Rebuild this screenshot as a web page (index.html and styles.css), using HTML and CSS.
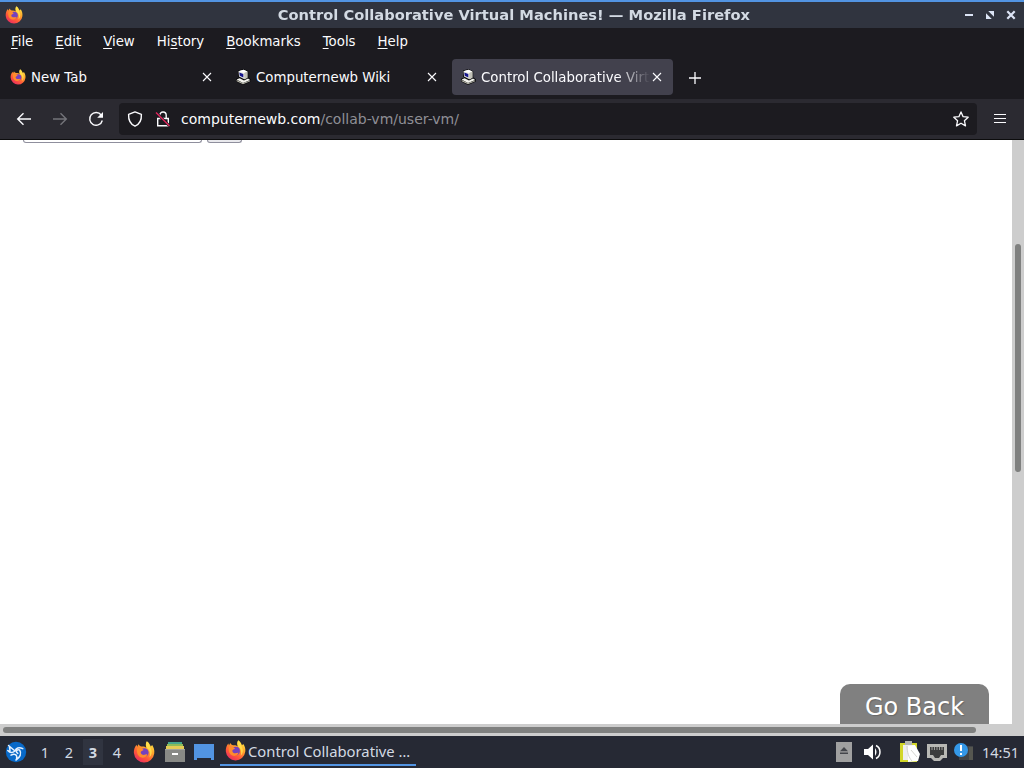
FILE: index.html
```html
<!DOCTYPE html>
<html lang="en">
<head>
    <meta charset="UTF-8">
    <title>Control Collaborative Virtual Machines!</title>
    <link rel="stylesheet" href="styles.css">
</head>
<body>

    <!-- Shared icons -->
    <svg class="icon-defs" width="0" height="0">
        <defs>
            <linearGradient id="fox-body" x1="0.85" y1="0" x2="0.2" y2="1">
                <stop offset="0" stop-color="#fff04c"/>
                <stop offset="0.35" stop-color="#ffa62b"/>
                <stop offset="0.68" stop-color="#ff5838"/>
                <stop offset="1" stop-color="#e62668"/>
            </linearGradient>
        </defs>
        <symbol id="firefox" viewBox="0 0 20 20">
            <path fill="url(#fox-body)" d="M12.6 0.3C15 1.7 15.4 3.7 16.2 5.1L17.4 3.7C19 6 19.7 8.5 19.3 11.3A9.3 9.3 0 0 1 .8 11C.5 8 1.6 5 3.2 3.3L3.8 5.2 5 2.9C5.6 4 6.5 4.9 7.8 5.1 9.3 4.8 11 5.2 12.1 6.2 11.5 4.3 11.3 2.2 12.6.3Z"/>
            <circle cx="10.3" cy="10.4" r="3.9" fill="#7542bd"/>
            <path fill="#ff8b2c" d="M3.8 6.4C6 5.7 8.1 6.6 9.7 8.2L7.6 9.4C6.4 10.3 7 12 8.7 12.5 10.5 13 11.8 11.8 13 12.2 12 14.7 9.4 15.7 7 14.8 4.2 13.6 3 10.4 3.8 6.4Z"/>
            <path fill="#ffe34c" d="M12.6.5C15 2 15.1 5 16.3 7.1 17.7 9.8 17 13 15 15 16 11 15.2 8.2 12.9 6.7 11.6 4.6 11.4 2.3 12.6.5Z" opacity=".85"/>
        </symbol>
        <symbol id="computer" viewBox="0 0 16 16">
            <path fill="#08080a" d="M3 1.5 8.5 0 13.2 2.2V8.2L16 10.6V12.6L8 16 1 12.6V9.8L4.5 8.6 3 7.5Z"/>
            <path fill="#e6e6df" d="M3.5 2.2 8.5 .8 12.4 2.6V8.8L9.4 10.3 4 7.4Z"/>
            <path fill="#fff" d="M3.5 2.2 8.5 .8 12.4 2.6 9 4.1Z"/>
            <path fill="#c2c1b8" d="M9.2 4 12.4 2.6V8.8L9.4 10.3Z"/>
            <path fill="#16168c" d="M4.3 3.4 8.3 5V8.5L4.7 6.8Z"/>
            <path fill="#f4f4ee" d="M1.6 10.4 4.6 9.3 9 11.6 13 9.4 15.2 11 8 14Z"/>
            <path fill="#b5b4a9" d="M1.6 11 8 14 15.2 11.4V12.3L8 15.2 1.6 12.2Z"/>
        </symbol>
        <symbol id="close" viewBox="0 0 10 10">
            <path d="M1 1 9 9M9 1 1 9" fill="none" stroke="currentColor" stroke-width="1.1"/>
        </symbol>
    </svg>

    <div class="window">
        <!-- Title bar -->
        <div class="titlebar">
            <svg class="title-icon" width="20" height="20"><use href="#firefox"/></svg>
            <div class="title">Control Collaborative Virtual Machines! — Mozilla Firefox</div>
            <div class="window-buttons">
                <svg width="10" height="10"><path d="M1 5H9" stroke="#dce4f5" stroke-width="2"/></svg>
                <svg width="10" height="10"><path d="M3.2 1H9V6.8ZM1 3.2V9H6.8Z" fill="#dce4f5"/></svg>
                <svg width="10" height="10"><path d="M1.3 1.3 8.7 8.7M8.7 1.3 1.3 8.7" stroke="#dce4f5" stroke-width="2.2"/></svg>
            </div>
        </div>

        <!-- Menu bar -->
        <div class="menubar">
            <span><u>F</u>ile</span>
            <span><u>E</u>dit</span>
            <span><u>V</u>iew</span>
            <span>Hi<u>s</u>tory</span>
            <span><u>B</u>ookmarks</span>
            <span><u>T</u>ools</span>
            <span><u>H</u>elp</span>
        </div>

        <!-- Tabs -->
        <div class="tabs">
            <div class="tab">
                <svg class="favicon" width="16" height="16"><use href="#firefox"/></svg>
                <span class="tab-label">New Tab</span>
                <svg class="tab-close" width="10" height="10"><use href="#close"/></svg>
            </div>
            <div class="tab">
                <svg class="favicon" width="16" height="16"><use href="#computer"/></svg>
                <span class="tab-label">Computernewb Wiki</span>
                <svg class="tab-close" width="10" height="10"><use href="#close"/></svg>
            </div>
            <div class="tab active">
                <svg class="favicon" width="16" height="16"><use href="#computer"/></svg>
                <span class="tab-label faded">Control Collaborative Virt</span>
                <svg class="tab-close" width="10" height="10"><use href="#close"/></svg>
            </div>
            <svg class="new-tab" width="12" height="12"><path d="M6 0V12M0 6H12" stroke="#fbfbfe" stroke-width="1.3"/></svg>
        </div>

        <!-- Navigation bar -->
        <div class="navbar">
            <div class="nav-buttons">
                <svg width="16" height="16" viewBox="0 0 16 16"><path d="M15 8H1.8M7.5 2.2 1.7 8 7.5 13.8" fill="none" stroke="#fbfbfe" stroke-width="1.4"/></svg>
                <svg width="16" height="16" viewBox="0 0 16 16"><path d="M1 8H14.2M8.5 2.2 14.3 8 8.5 13.8" fill="none" stroke="#74747a" stroke-width="1.4"/></svg>
                <svg width="16" height="16" viewBox="0 0 16 16"><path d="M13.2 4A6.4 6.4 0 1 0 14.3 9.5" fill="none" stroke="#fbfbfe" stroke-width="1.4"/><path d="M15 1V6.8H9.2Z" fill="#fbfbfe"/></svg>
            </div>
            <div class="urlbar">
                <svg width="16" height="16" viewBox="0 0 16 16"><path d="M8 .9 14.4 3.3C14.7 9 12.3 13.4 8 15.2 3.7 13.4 1.3 9 1.6 3.3Z" fill="none" stroke="#fbfbfe" stroke-width="1.4" stroke-linejoin="round"/></svg>
                <svg class="lock" width="16" height="16" viewBox="0 0 16 16"><path d="M2.7 7.5H13.3V14.8H2.7ZM4.8 7.5V4.2A3.2 3.2 0 0 1 11.2 4.2V7.5" fill="none" stroke="#fbfbfe" stroke-width="1.4"/><path d="M1 1.5 14.5 15" stroke="#1c1b22" stroke-width="2.6"/><path d="M1 1.5 14.5 15" stroke="#e0245a" stroke-width="1.4"/></svg>
                <span class="url">computernewb.com<span>/collab-vm/user-vm/</span></span>
                <svg class="star" width="16" height="16" viewBox="0 0 16 16"><path d="M8 .9 10.1 5.7 15.2 6.2 11.4 9.7 12.5 14.9 8 12.2 3.5 14.9 4.6 9.7 .8 6.2 5.9 5.7Z" fill="none" stroke="#fbfbfe" stroke-width="1.3" stroke-linejoin="round"/></svg>
            </div>
            <svg class="hamburger" width="12" height="10"><path d="M0 .5H12M0 4.5H12M0 8.5H12" stroke="#fbfbfe"/></svg>
        </div>

        <!-- Page -->
        <div class="viewport">
            <div class="page">
                <div class="form-row">
                    <div class="field"></div>
                    <div class="send"></div>
                </div>
                <div class="go-back">Go Back</div>
            </div>
            <div class="scroll-y"><div class="thumb-y"></div></div>
        </div>
        <div class="scroll-x"><div class="thumb-x"></div></div>
    </div>

    <!-- Taskbar -->
    <div class="taskbar">
        <svg class="start" width="22" height="22" viewBox="0 0 22 22">
            <circle cx="11" cy="11" r="10.2" fill="#0869c8"/>
            <path d="M3.5 4.5 10 10M2.8 9.5C5 12 8 11.6 10 10 11 7.2 13.6 5.8 17.8 7.6M4.5 6 5 9.8M14.6 9C17 12.5 15 16.5 11 19M6 14.2C9.5 12 12.6 13.4 11.6 18M13.8 8.8C11 8.8 10.6 11 12.8 12.4" fill="none" stroke="#e6f1ff" stroke-width="1.5" stroke-linecap="round"/>
        </svg>
        <div class="desktops">
            <span>1</span>
            <span>2</span>
            <span class="current">3</span>
            <span>4</span>
        </div>
        <div class="launchers">
            <svg width="22" height="22"><use href="#firefox"/></svg>
            <svg width="20" height="20" viewBox="0 0 20 20">
                <path d="M3 0H17V3H3Z" fill="#46a58c"/><path d="M2 2H18V4H2Z" fill="#8dbb59"/><path d="M1 4H19V7H1Z" fill="#e5cb56"/>
                <path d="M0 7H20V20H0Z" fill="#888986"/><path d="M0 7.5H20" stroke="#a1a29e"/><path d="M7 12H13" stroke="#fff" stroke-width="2"/>
            </svg>
            <svg width="20" height="18" viewBox="0 0 20 18"><path d="M0 1H20V17H17V15H3V17H0Z" fill="#5294e2"/></svg>
        </div>
        <div class="task">
            <svg width="21" height="21"><use href="#firefox"/></svg>
            <span>Control Collaborative …</span>
        </div>
        <div class="tray">
            <svg width="16" height="20" viewBox="0 0 16 20"><path d="M0 0H16V20H0Z" fill="#a0a0a0"/><path d="M8 5 12 9.3H4ZM4 10.5H12V12H4Z" fill="#44464b"/></svg>
            <svg class="volume" width="17" height="16" viewBox="0 0 17 16"><path d="M0 5H4L9 .5V15.5L4 11H0Z" fill="#fff"/><path d="M11 4Q14 8 11 12Z" fill="#fff"/><path d="M12 1.5C17.3 4 17.3 12 12 14.5" fill="none" stroke="#fff" stroke-width="1.5"/></svg>
            <svg class="clipboard" width="20" height="22" viewBox="0 0 20 22"><path d="M0 2H17V21H0Z" fill="#d2d629"/><path d="M3 4H15V19H3Z" fill="#eee"/><path d="M5 0H12V4H5Z" fill="#b5b7b2"/><path d="M8 5 15 4 20 13 18 20 8 21Z" fill="#fff"/><path d="M7 5C7 11 9 17 12 20M11 9 17 16" fill="none" stroke="#d5d5d1"/></svg>
            <svg class="network" width="20" height="19" viewBox="0 0 20 19"><path d="M0 1H20V15H16L13 18H7L4 15H0Z" fill="#b8b8b4"/><path d="M3 4H17V12H14L12 15H8L6 12H3Z" fill="#3c3d3d"/><path d="M5 4V7M7.5 4V7M10 4V7M12.5 4V7M15 4V7" stroke="#b8b8b4" stroke-width=".8"/></svg>
            <svg class="updates" width="20" height="18" viewBox="0 0 20 18"><path d="M5 3H19V17H5Z" fill="#414447"/><path d="M15 4H19V17H15Z" fill="#555650"/><circle cx="7" cy="7" r="7" fill="#3498e8"/><path d="M7 2V8M7 10V12" stroke="#fff" stroke-width="2"/></svg>
            <span class="clock">14:51</span>
        </div>
    </div>

</body>
</html>
```
FILE: styles.css
```css
* {
    box-sizing: border-box;
}

body {
    margin: 0;
    width: 1024px;
    height: 768px;
    overflow: hidden;
    display: flex;
    flex-direction: column;
    font-family: "DejaVu Sans", sans-serif;
    font-size: 13.33px;
    color: #fbfbfe;
    background-color: #fff;
}

svg {
    display: block;
    flex-shrink: 0;
}

.icon-defs {
    position: absolute;
}

.window {
    height: 736px;
    display: flex;
    flex-direction: column;
}

/* Title bar */
.titlebar {
    height: 28px;
    border-top: 2px solid #5294e2;
    background-color: #30343f;
    display: flex;
    align-items: center;
    padding: 0 8px 0 5px;
    color: #d3dae3;
}

.title-icon {
    width: 18px;
    height: 18px;
}

.title {
    flex: 1;
    padding-left: 37px;
    text-align: center;
    font-weight: bold;
    white-space: nowrap;
    transform: scaleX(1.1);
}

.window-buttons {
    display: flex;
    gap: 11px;
}

/* Menu bar */
.menubar {
    height: 27px;
    padding-left: 11px;
    background-color: #1c1b20;
    display: flex;
    align-items: center;
    gap: 22px;
}

.menubar u {
    text-underline-offset: 2px;
    text-decoration-thickness: 1px;
}

/* Tabs */
.tabs {
    height: 44px;
    padding: 4px 2px;
    background-color: #1c1b20;
    display: flex;
    gap: 4px;
}

.tab {
    width: 221px;
    height: 36px;
    padding: 0 11px 0 8px;
    border-radius: 4px;
    display: flex;
    align-items: center;
}

.tab.active {
    background-color: #42414d;
}

.tab-label {
    flex: 1;
    margin-left: 5px;
    white-space: nowrap;
}

.tab-label.faded {
    -webkit-mask-image: linear-gradient(to left, transparent, #000 32px);
    mask-image: linear-gradient(to left, transparent, #000 32px);
}

.tab-close {
    margin-left: 2px;
}

.new-tab {
    margin: 13px 0 0 12px;
}

/* Navigation bar */
.navbar {
    height: 41px;
    background-color: #2b2a31;
    border-bottom: 1px solid #0c0c0d;
    display: flex;
    align-items: center;
}

.nav-buttons {
    width: 119px;
    padding-left: 16px;
    display: flex;
    gap: 20px;
}

.urlbar {
    width: 858px;
    height: 32px;
    padding: 0 8px;
    border-radius: 4px;
    background-color: #1c1b20;
    display: flex;
    align-items: center;
}

.lock {
    margin-left: 12px;
}

.url {
    flex: 1;
    margin-left: 10px;
    font-size: 14px;
}

.url span {
    color: #8f8f96;
}

.hamburger {
    margin-left: 17px;
}

/* Page */
.viewport {
    height: 584px;
    display: flex;
}

.page {
    width: 1012px;
    padding: 0 23px;
    background-color: #fff;
    display: flex;
    flex-direction: column;
    justify-content: space-between;
}

.form-row {
    display: flex;
    gap: 5px;
}

.field, .send {
    height: 3px;
    border: 1px solid #8f8f9d;
    border-top: none;
    border-radius: 0 0 3px 3px;
}

.field {
    width: 179px;
}

.send {
    width: 35px;
    background-color: #e9e9ed;
}

.go-back {
    align-self: flex-end;
    width: 149px;
    height: 40px;
    border-radius: 10px 10px 0 0;
    background-color: #808080;
    color: #fff;
    font-size: 24px;
    line-height: 47px;
    text-align: center;
    text-shadow: 1px 1px 1px #666;
}

/* Scrollbars */
.scroll-y {
    width: 12px;
    padding: 104px 3px 0;
    background-color: #cdcdcd;
}

.thumb-y {
    height: 228px;
    border-radius: 3px;
    background-color: #7f807f;
}

.scroll-x {
    height: 12px;
    padding: 3px;
    background-color: #cdcdcd;
}

.thumb-x {
    width: 973px;
    height: 6px;
    border-radius: 3px;
    background-color: #7f807f;
}

/* Taskbar */
.taskbar {
    height: 32px;
    padding-left: 5px;
    background-color: #262934;
    display: flex;
    align-items: center;
    font-family: "Noto Sans", sans-serif;
    font-size: 14.5px;
    color: #d3dae3;
}

.desktops {
    display: flex;
    margin-left: 6px;
}

.desktops span {
    width: 24px;
    line-height: 26px;
    text-align: center;
}

.desktops .current {
    width: 20px;
    margin: 0 2px;
    background-color: #303440;
    font-weight: bold;
}

.launchers {
    display: flex;
    align-items: center;
    gap: 10px;
    margin-left: 4px;
}

.launchers svg:last-child {
    margin-left: -1px;
}

.task {
    width: 196px;
    height: 30px;
    margin: 0 0 2px 6px;
    padding-left: 5px;
    border-bottom: 2px solid #5294e2;
    display: flex;
    align-items: center;
    gap: 2px;
    font-size: 14.8px;
    line-height: 22px;
    white-space: nowrap;
}

.task span {
    padding-top: 1px;
}

.tray {
    display: flex;
    align-items: center;
    margin-left: auto;
    padding-right: 5px;
}

.volume {
    margin-left: 12px;
}

.clipboard {
    margin-left: 19px;
}

.network {
    margin-left: 7px;
}

.updates {
    margin-left: 7px;
}

.clock {
    margin-left: 8px;
}
```
